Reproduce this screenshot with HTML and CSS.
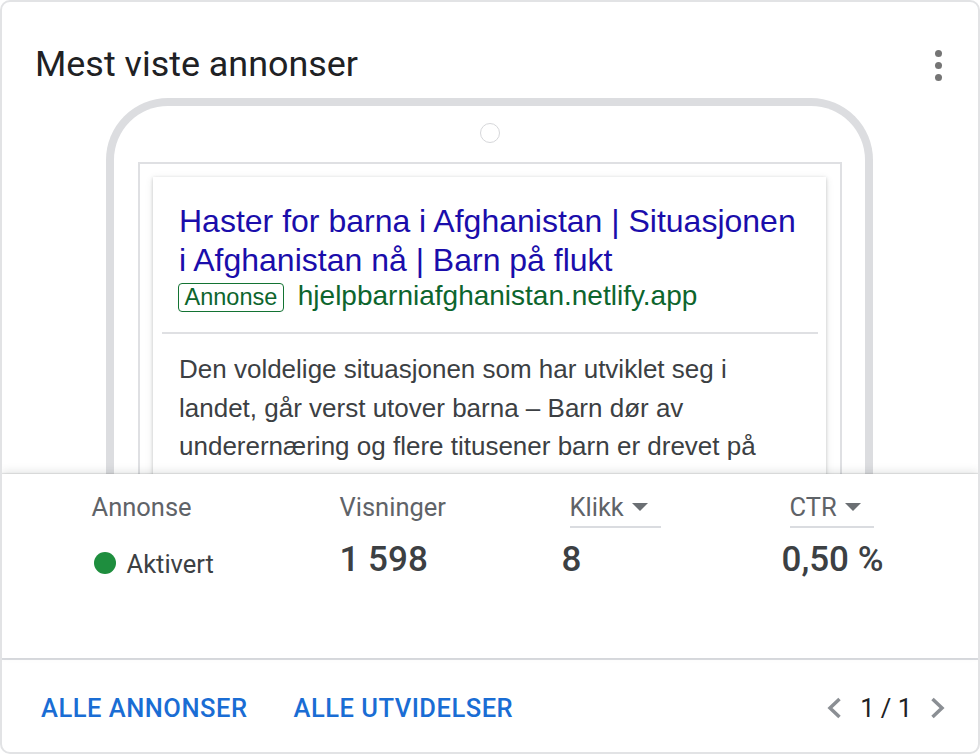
FILE: index.html
```html
<!DOCTYPE html>
<html lang="no">
<head>
<meta charset="utf-8">
<title>Mest viste annonser</title>
<link rel="stylesheet" href="styles.css">
</head>
<body>
<div class="card">
  <div class="card-header">
    <h2 class="title">Mest viste annonser</h2>
    <div class="kebab" aria-label="Flere valg"><span></span><span></span><span></span></div>
  </div>
  <div class="preview">
    <div class="phone">
      <div class="camera"></div>
      <div class="screen">
        <div class="ad">
          <div class="ad-title">Haster for barna i Afghanistan | Situasjonen i Afghanistan nå | Barn på flukt</div>
          <div class="ad-url-row"><span class="badge">Annonse</span><span class="ad-url">hjelpbarniafghanistan.netlify.app</span></div>
          <div class="ad-sep"></div>
          <p class="ad-desc">Den voldelige situasjonen som har utviklet seg i landet, går verst utover barna – Barn dør av underernæring og flere titusener barn er drevet på flukt.</p>
        </div>
      </div>
    </div>
  </div>
  <div class="stats">
    <div class="stat-label">Annonse</div>
    <div class="stat-label">Visninger</div>
    <div class="stat-label"><span class="sort">Klikk<svg class="arrow" viewBox="0 0 16 8" width="16" height="8"><path d="M0 0h16L8 8z"/></svg></span></div>
    <div class="stat-label"><span class="sort">CTR<svg class="arrow" viewBox="0 0 16 8" width="16" height="8"><path d="M0 0h16L8 8z"/></svg></span></div>
    <div class="stat-status"><span class="dot"></span><span>Aktivert</span></div>
    <div class="stat-value">1 598</div>
    <div class="stat-value">8</div>
    <div class="stat-value">0,50 %</div>
  </div>
  <div class="footer">
    <a class="btn">ALLE ANNONSER</a>
    <a class="btn">ALLE UTVIDELSER</a>
    <div class="pager">
      <svg class="chev" viewBox="0 0 16 22" width="16" height="22"><path d="M13.5 2 L4 11 L13.5 20"/></svg>
      <span class="pages">1 / 1</span>
      <svg class="chev" viewBox="0 0 16 22" width="16" height="22"><path d="M2.5 2 L12 11 L2.5 20"/></svg>
    </div>
  </div>
</div>
</body>
</html>
```
FILE: styles.css
```css
* { box-sizing: border-box; }
html, body { margin: 0; padding: 0; background: #ffffff; }
body { font-family: Roboto, "Liberation Sans", Arial, sans-serif; color: #202124; }

.card {
  width: 980px;
  height: 754px;
  border: 2px solid #e2e3e5;
  border-radius: 10px;
  overflow: hidden;
  background: #fff;
  display: flex;
  flex-direction: column;
}

.card-header {
  height: 96px;
  flex: none;
  display: flex;
  align-items: flex-start;
  padding: 42px 36px 0 33px;
}
.title {
  margin: 0;
  font-size: 35.9px;
  line-height: 41px;
  font-weight: 400;
  color: #202124;
}
.kebab {
  margin-left: auto;
  margin-top: 6px;
  display: flex;
  flex-direction: column;
  gap: 5px;
}
.kebab span {
  width: 7px;
  height: 7px;
  border-radius: 50%;
  background: #757575;
}

.preview {
  height: 376px;
  flex: none;
  overflow: hidden;
  padding-left: 104px;
}
.phone {
  width: 767px;
  height: 500px;
  border: 8px solid #dcdde0;
  border-bottom: none;
  border-radius: 62px 62px 0 0;
  display: flex;
  flex-direction: column;
  align-items: center;
}
.camera {
  width: 20px;
  height: 20px;
  margin-top: 17px;
  border: 1.5px solid #d6d7da;
  border-radius: 50%;
  flex: none;
}
.screen {
  align-self: stretch;
  margin: 19px 23px 0 24px;
  border: 2px solid #dfe0e3;
  border-bottom: none;
  padding: 13px 14px 0 13px;
  flex: 1;
}
.ad {
  background: #fff;
  box-shadow: 0 1px 3px rgba(60, 64, 67, 0.25), 0 2px 8px rgba(60, 64, 67, 0.12);
  padding: 25px 26px 40px 26px;
  font-family: "Liberation Sans", Arial, sans-serif;
}
.ad-title {
  font-size: 32px;
  line-height: 38.5px;
  color: #1a0dab;
}
.ad-url-row {
  display: flex;
  align-items: baseline;
  line-height: 33px;
}
.badge {
  font-size: 23.5px;
  line-height: 27px;
  color: #0d652d;
  border: 1.5px solid #137333;
  border-radius: 4px;
  padding: 0 5.5px;
  margin-left: -1px;
}
.ad-url {
  margin-left: 14px;
  font-size: 28px;
  color: #0d652d;
}
.ad-sep {
  height: 2px;
  background: #dfe0e3;
  margin: 20px -18px 0 -17px;
}
.ad-desc {
  margin: 16px 0 0;
  font-size: 26px;
  line-height: 38.5px;
  color: #3c4043;
}

.stats {
  position: relative;
  z-index: 1;
  height: 184px;
  flex: none;
  background: #fff;
  box-shadow: 0 -1px 1px rgba(60, 64, 67, 0.12), 0 -3px 8px rgba(60, 64, 67, 0.12);
  display: grid;
  grid-template-columns: 248px 222px 220px 1fr;
  grid-template-rows: 36px 41px;
  row-gap: 11px;
  align-content: start;
  padding: 18px 0 0 89.5px;
}
.stat-label {
  font-size: 25.5px;
  line-height: 30px;
  color: #5f6368;
}
.sort {
  display: inline-flex;
  align-items: center;
  margin-left: 8px;
  padding-bottom: 4px;
  padding-right: 13px;
  border-bottom: 2px solid #dadce0;
}
.arrow {
  margin-left: 8px;
  fill: #6b6f73;
}
.stat-status {
  display: flex;
  align-items: center;
  padding-top: 9px;
  font-size: 25.5px;
  line-height: 41px;
  color: #3c4043;
}
.dot {
  width: 22px;
  height: 22px;
  border-radius: 50%;
  background: #1e8e3e;
  margin: -3px 11px 0 2px;
}
.stat-value {
  font-size: 35px;
  line-height: 41px;
  font-weight: 500;
  color: #3c4043;
}

.footer {
  flex: 1;
  border-top: 2px solid #dadce0;
  display: flex;
  align-items: center;
  padding: 3px 32px 0 39px;
}
.btn {
  font-size: 25.5px;
  font-weight: 500;
  letter-spacing: 0.02em;
  color: #1a6dd4;
  margin-right: 46px;
}
.pager {
  margin-left: auto;
  display: flex;
  align-items: center;
}
.chev {
  fill: none;
  stroke: #8b8f94;
  stroke-width: 3.5px;
}
.pages {
  font-size: 25.5px;
  color: #202124;
  margin: 0 18px;
}
```
